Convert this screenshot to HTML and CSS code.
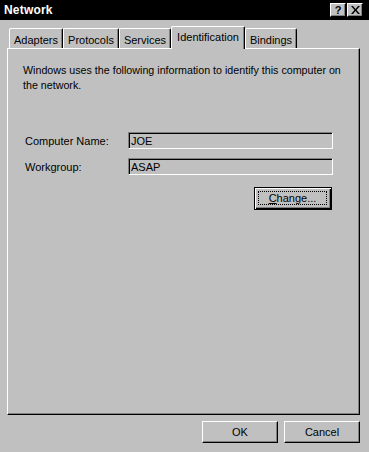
FILE: index.html
```html
<!DOCTYPE html>
<html>
<head>
<meta charset="utf-8">
<link rel="stylesheet" href="styles.css">
</head>
<body>
<div class="window">
  <div class="titlebar">
    <span class="title">Network</span>
    <div class="title-btns">
      <span class="tbtn">?</span>
      <span class="tbtn tbtn-x">
        <svg width="9" height="8" viewBox="0 0 9 8"><path d="M0 0h2l2.5 3 2.5-3h2l-3.5 4 3.5 4h-2l-2.5-3-2.5 3h-2l3.5-4z" fill="#000"/></svg>
      </span>
    </div>
  </div>
  <div class="tabs">
    <div class="tab t1">Adapters</div>
    <div class="tab t2">Protocols</div>
    <div class="tab t3">Services</div>
    <div class="tab t4 active">Identification</div>
    <div class="tab t5">Bindings</div>
  </div>
  <div class="panel">
    <p class="intro">Windows uses the following information to identify this computer on<br>the network.</p>
    <div class="rows">
      <div class="row"><span class="label">Computer Name:</span><span class="field">JOE</span></div>
      <div class="row"><span class="label">Workgroup:</span><span class="field">ASAP</span></div>
    </div>
    <div class="change-wrap">
      <div class="btn default"><span class="focus"><u>C</u>hange...</span></div>
    </div>
  </div>
  <div class="footer">
    <div class="btn">OK</div>
    <div class="btn">Cancel</div>
  </div>
</div>
</body>
</html>
```
FILE: styles.css
```css
html, body {
  margin: 0;
  padding: 0;
  background: #c0c0c0;
}
.window {
  width: 369px;
  height: 452px;
  background: #c0c0c0;
  font-family: "Liberation Sans", Arial, sans-serif;
  font-size: 11px;
  color: #000;
}
.titlebar {
  height: 20px;
  background: #000;
  display: flex;
  align-items: center;
  justify-content: space-between;
  padding: 0 6px 0 4px;
  box-sizing: border-box;
}
.title {
  color: #fff;
  font-weight: bold;
  font-size: 12px;
  letter-spacing: 0.2px;
}
.title-btns {
  display: flex;
  gap: 1px;
}
.tbtn {
  width: 16px;
  height: 14px;
  box-sizing: border-box;
  background: #c0c0c0;
  border-top: 1px solid #fff;
  border-left: 1px solid #fff;
  border-right: 1px solid #000;
  border-bottom: 1px solid #000;
  box-shadow: inset -1px -1px 0 #808080;
  display: flex;
  align-items: center;
  justify-content: center;
  font-weight: bold;
  font-size: 11px;
  line-height: 1;
}
.tabs {
  display: flex;
  align-items: flex-end;
  padding-left: 9px;
  margin-top: 6px;
  height: 22px;
  position: relative;
  z-index: 1;
}
.tab {
  height: 20px;
  box-sizing: border-box;
  border-top: 1px solid #fff;
  border-left: 1px solid #fff;
  border-right: 1px solid #000;
  box-shadow: inset -1px 0 0 #808080;
  border-radius: 2px 2px 0 0;
  display: flex;
  align-items: center;
  justify-content: center;
  font-size: 11px;
  padding-top: 2px;
}
.t1 { width: 54px; }
.t2 { width: 56px; }
.t3 { width: 52px; }
.t4 { width: 74px; }
.t5 { width: 52px; }
.tab.active {
  height: 23px;
  margin-bottom: -1px;
  background: #c0c0c0;
  padding-top: 0;
  padding-bottom: 3px;
}
.panel {
  margin-left: 7px;
  width: 353px;
  height: 367px;
  box-sizing: border-box;
  border-top: 1px solid #fff;
  border-left: 1px solid #fff;
  border-right: 1px solid #000;
  border-bottom: 1px solid #000;
  box-shadow: inset -1px -1px 0 #808080;
  padding: 14px 4px 0 15px;
}
.intro {
  margin: 0;
  font-size: 10.7px;
  line-height: 15px;
  white-space: nowrap;
}
.rows {
  margin-top: 39px;
  display: flex;
  flex-direction: column;
  gap: 9px;
}
.row {
  display: flex;
  align-items: center;
}
.label {
  width: 103px;
  font-size: 11px;
  padding-left: 2px;
}
.field {
  width: 205px;
  height: 17px;
  box-sizing: border-box;
  border-top: 1px solid #808080;
  border-left: 1px solid #808080;
  border-right: 1px solid #fff;
  border-bottom: 1px solid #fff;
  box-shadow: inset 1px 1px 0 #000;
  padding: 1px 0 0 2px;
  font-size: 11px;
  line-height: 14px;
}
.change-wrap {
  display: flex;
  justify-content: flex-end;
  margin-top: 12px;
  padding-right: 23px;
}
.btn {
  width: 76px;
  height: 22px;
  box-sizing: border-box;
  border-top: 1px solid #fff;
  border-left: 1px solid #fff;
  border-right: 1px solid #000;
  border-bottom: 1px solid #000;
  box-shadow: inset -1px -1px 0 #808080;
  display: flex;
  align-items: center;
  justify-content: center;
  font-size: 11px;
}
.btn.default {
  width: 78px;
  height: 23px;
  border: 1px solid #000;
  box-shadow: inset 1px 1px 0 #fff, inset -1px -1px 0 #000, inset -2px -2px 0 #808080;
  padding: 3px 4px 4px 3px;
}
.focus {
  flex: 1;
  align-self: stretch;
  border: 1px dotted #000;
  display: flex;
  align-items: center;
  justify-content: center;
}
.footer {
  display: flex;
  justify-content: flex-end;
  gap: 6px;
  padding-right: 9px;
  margin-top: 6px;
}
```
